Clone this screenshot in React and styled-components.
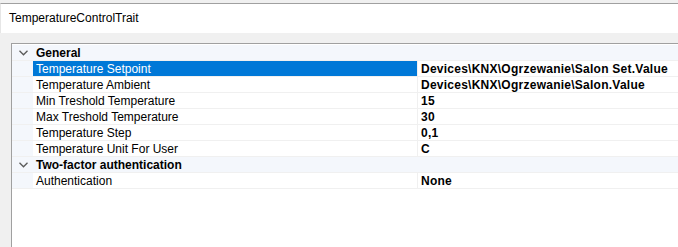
import React from "react";
import styled, { createGlobalStyle } from "styled-components";

const Global = createGlobalStyle`
  html, body { margin: 0; padding: 0; background: #f0f0f0; }
  body { font-family: "Liberation Sans", Arial, sans-serif; font-size: 12px; color: #000; }
  #root { width: 678px; height: 247px; overflow: hidden; }
`;

const Frame = styled.div`
  display: flex;
  flex-direction: column;
  width: 678px;
  height: 247px;
  padding-top: 3px;
  box-sizing: border-box;
  background: #f0f0f0;
`;

const TitlePanel = styled.div`
  height: 30px;
  border-top: 1px solid #a0a0a0;
  border-left: 1px solid #e6e6e6;
  background: #fff;
  display: flex;
  align-items: center;
  padding-left: 8px;
  padding-bottom: 1px;
  box-sizing: border-box;
  flex-shrink: 0;
`;

const Title = styled.span`
  font-size: 12px;
  color: #000;
`;

const Spacer = styled.div`
  height: 10px;
  flex-shrink: 0;
`;

const Grid = styled.div`
  flex: 1;
  margin-left: 11px;
  padding-top: 1px;
  border-top: 1px solid #a0a0a0;
  border-left: 1px solid #a0a0a0;
  background: #fff;
  display: flex;
  flex-direction: column;
`;

const Row = styled.div`
  display: grid;
  grid-template-columns: 21px 384px 1px 1fr;
  height: 16px;
  box-sizing: border-box;
  border-bottom: 1px solid #f0f0f0;
  background: ${(p) => (p.$category ? "#f4f7fc" : "#fff")};
`;

const Gutter = styled.div`
  background: #f4f7fc;
  display: flex;
  align-items: center;
  justify-content: center;
`;

const NameCell = styled.div`
  display: flex;
  align-items: center;
  padding: 2px 0 0 3px;
  white-space: nowrap;
  overflow: hidden;
  background: ${(p) => (p.$selected ? "#0078d7" : "transparent")};
  color: ${(p) => (p.$selected ? "#fff" : "#000")};
  line-height: 13px;
`;

const CategoryName = styled.div`
  grid-column: 2 / 5;
  display: flex;
  align-items: center;
  padding: 2px 0 0 3px;
  font-weight: 700;
  white-space: nowrap;
  line-height: 13px;
`;

const Divider = styled.div`
  background: #f0f0f0;
`;

const ValueCell = styled.div`
  display: flex;
  align-items: center;
  padding: 2px 0 0 3px;
  font-weight: 700;
  letter-spacing: 0.25px;
  white-space: nowrap;
  overflow: hidden;
  line-height: 13px;
`;

const Chevron = () => (
  <svg width="9" height="6" viewBox="0 0 9 6" style={{ marginLeft: 1, marginTop: 1 }}>
    <path d="M0.5 0.8 L4.5 4.8 L8.5 0.8" fill="none" stroke="#5a5a5a" strokeWidth="1.3" />
  </svg>
);

const data = [
  {
    category: "General",
    items: [
      ["Temperature Setpoint", "Devices\\KNX\\Ogrzewanie\\Salon Set.Value", true],
      ["Temperature Ambient", "Devices\\KNX\\Ogrzewanie\\Salon.Value"],
      ["Min Treshold Temperature", "15"],
      ["Max Treshold Temperature", "30"],
      ["Temperature Step", "0,1"],
      ["Temperature Unit For User", "C"],
    ],
  },
  {
    category: "Two-factor authentication",
    items: [["Authentication", "None"]],
  },
];

export default function App() {
  return (
    <>
      <Global />
      <Frame>
        <TitlePanel>
          <Title>TemperatureControlTrait</Title>
        </TitlePanel>
        <Spacer />
        <Grid>
          {data.map((cat) => (
            <React.Fragment key={cat.category}>
              <Row $category>
                <Gutter>
                  <Chevron />
                </Gutter>
                <CategoryName>{cat.category}</CategoryName>
              </Row>
              {cat.items.map(([name, value, sel]) => (
                <Row key={name}>
                  <Gutter />
                  <NameCell $selected={sel}>{name}</NameCell>
                  <Divider />
                  <ValueCell>{value}</ValueCell>
                </Row>
              ))}
            </React.Fragment>
          ))}
        </Grid>
      </Frame>
    </>
  );
}
